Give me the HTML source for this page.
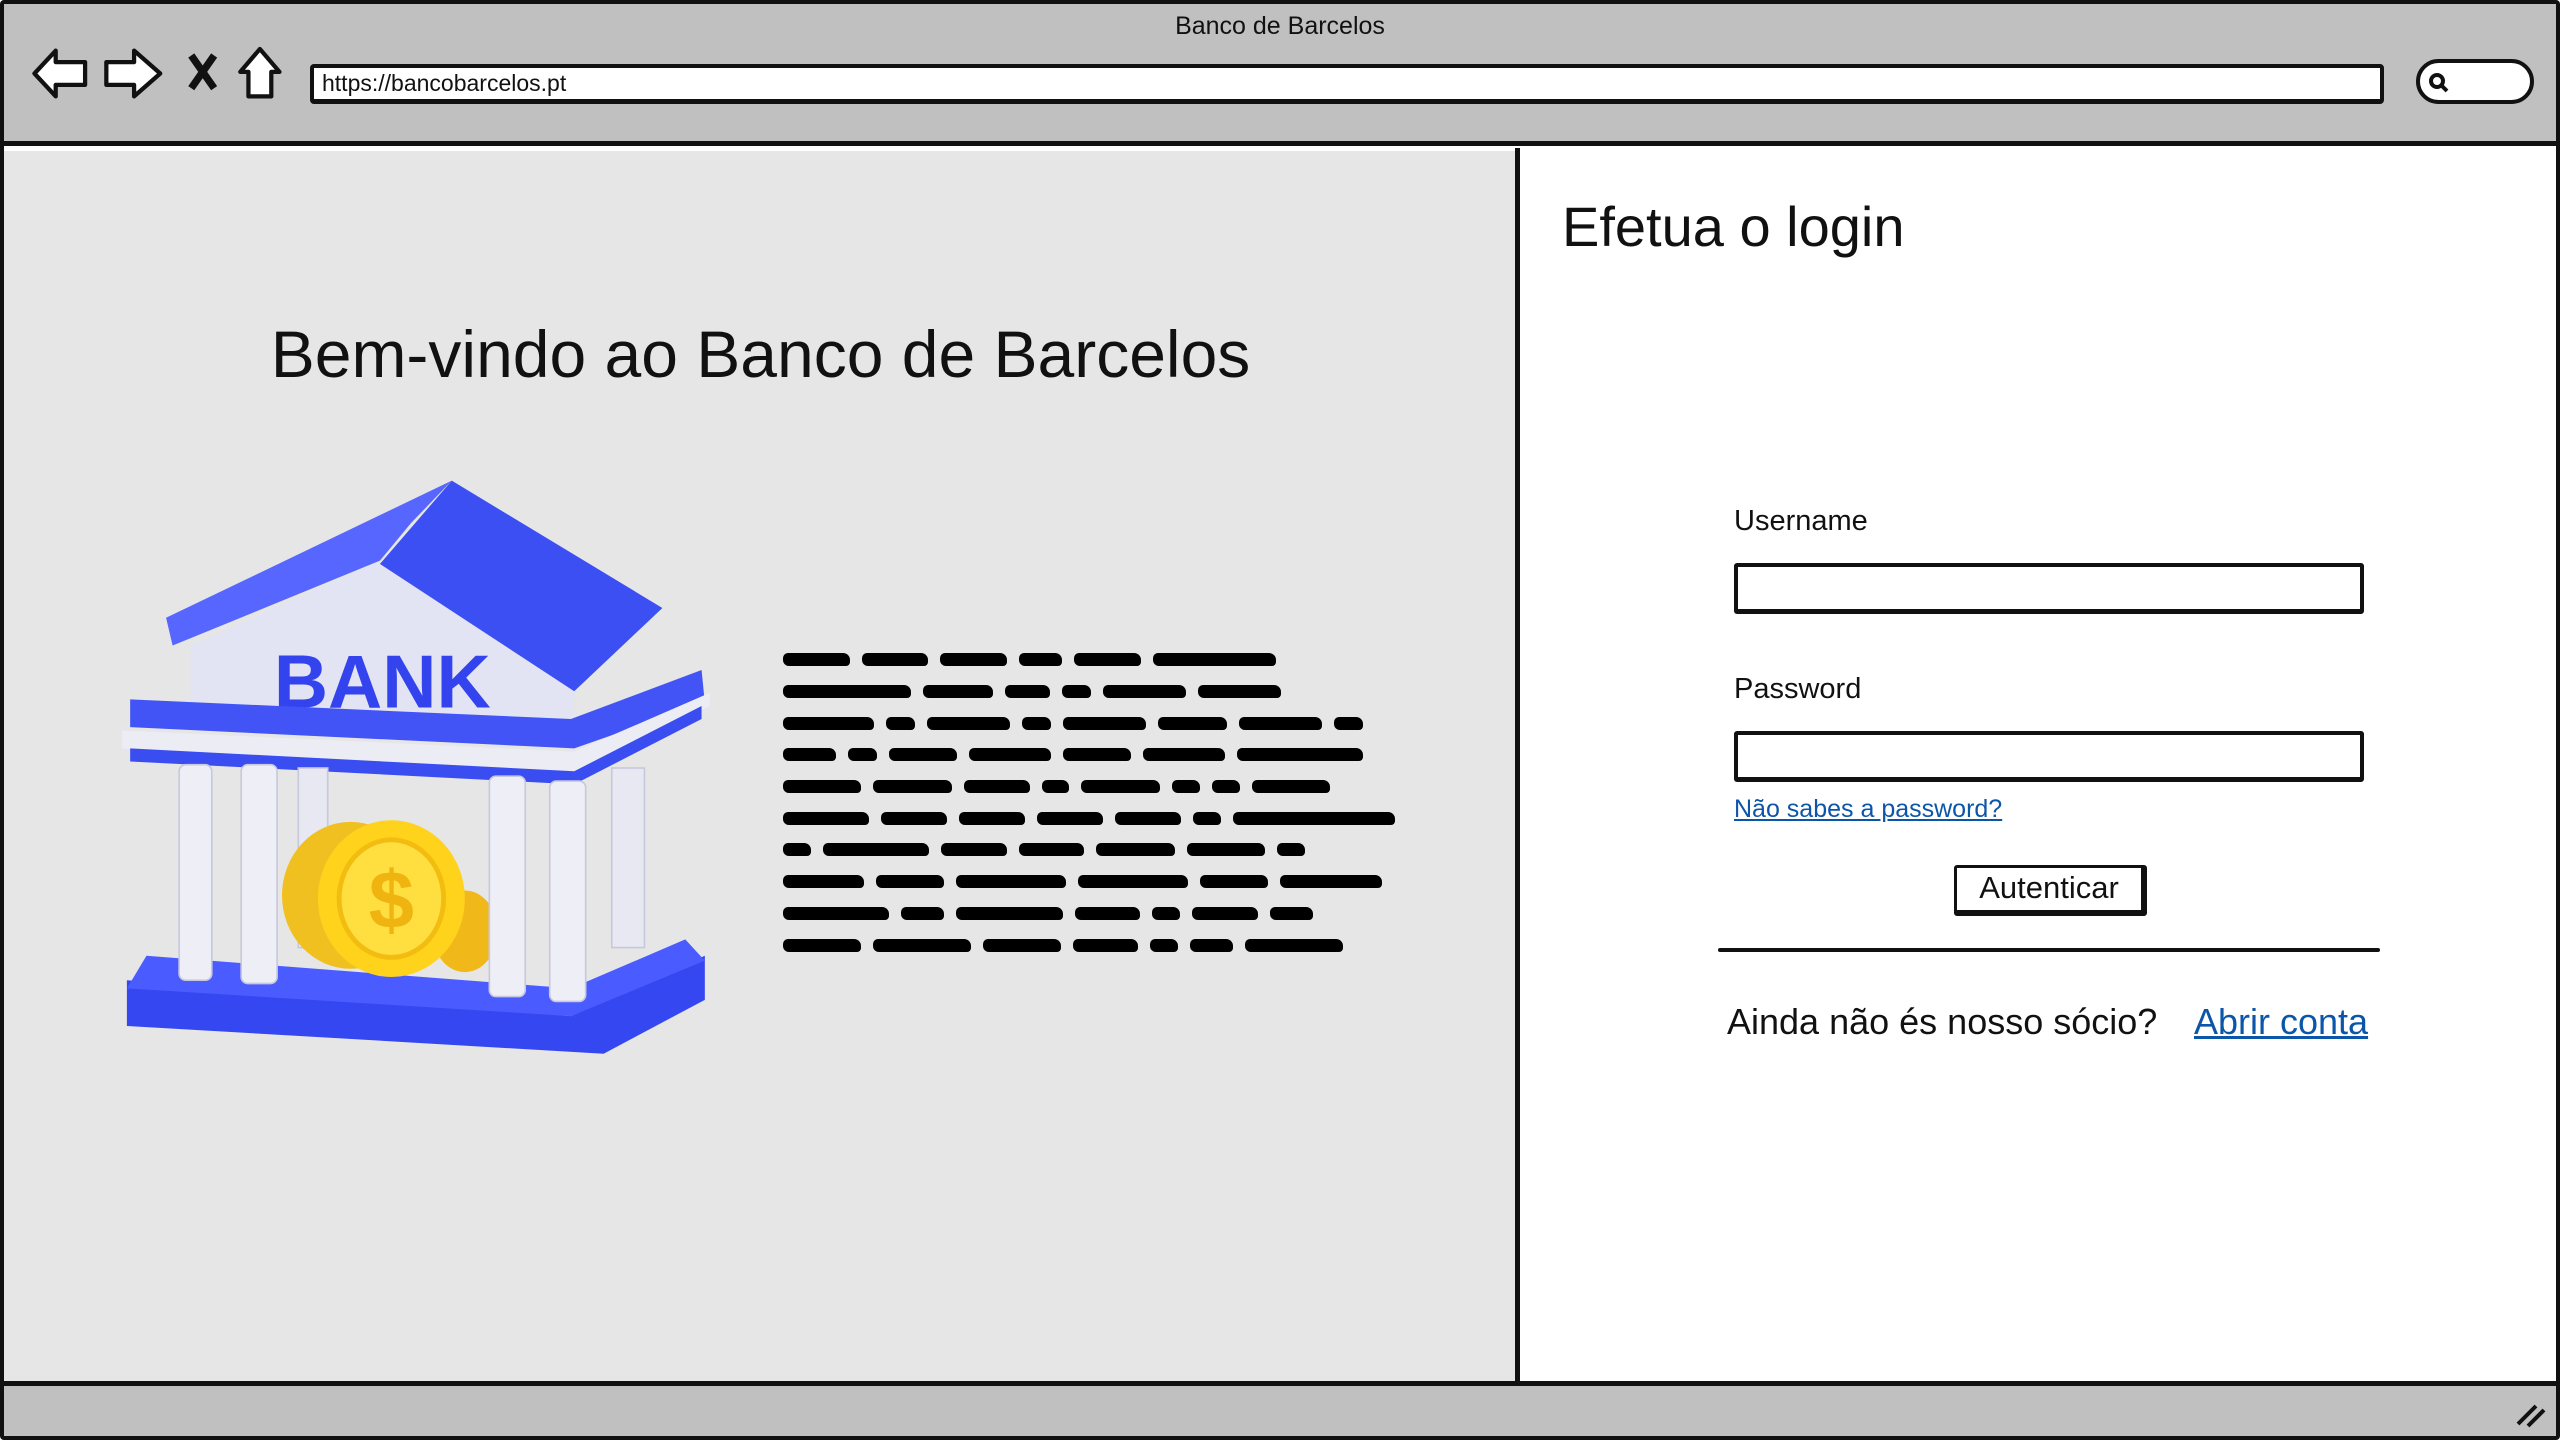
<!DOCTYPE html>
<html><head><meta charset="utf-8"><style>
*{margin:0;padding:0;box-sizing:border-box}
body{width:2560px;height:1440px;overflow:hidden;background:#fff;font-family:"Liberation Sans",sans-serif;position:relative}
.a{position:absolute}
.sc{display:flex;gap:12px;height:31.7px;align-items:center}
.sc i{display:block;height:13px;background:#000;border-radius:5px 7px 4px 6px}
</style></head><body>
<div class="a" style="left:0;top:0;width:2560px;height:1440px;border:4px solid #111;border-radius:4px"></div>
<div class="a" style="left:4px;top:4px;width:2552px;height:142px;background:#c0c0c0;border-bottom:5px solid #111"></div>
<div class="a" style="left:0;top:12px;width:2560px;text-align:center;font-size:25px;color:#111">Banco de Barcelos</div>
<svg class="a" style="left:0;top:0" width="327" height="147" viewBox="0 0 200 90">
<g fill="#fff" stroke="#111" stroke-width="2.6" stroke-linejoin="round">
<path d="M21 45 L34 31 L34 38 L52 38 L52 52 L34 52 L34 59 Z"/>
<path d="M98 45 L82 31 L82 38 L65 38 L65 52 L82 52 L82 59 Z"/>
<path d="M159 30 L147 44 L152 44 L152 59 L166 59 L166 44 L171 44 Z"/>
</g>
<path d="M117 34 L131 54 M131 34 L117 54" stroke="#111" stroke-width="4.5"/>
</svg>
<div class="a" style="left:310px;top:64px;width:2074px;height:40px;background:#fff;border:4px solid #111;border-radius:4px;border-bottom-width:5px;font-size:23px;line-height:30px;padding-left:8px;color:#111">https://bancobarcelos.pt</div>
<div class="a" style="left:2416px;top:59px;width:118px;height:45px;background:#fff;border:4px solid #111;border-radius:24px"></div>
<svg class="a" style="left:2424px;top:68px" width="30" height="30" viewBox="0 0 30 30"><circle cx="13" cy="13" r="6" fill="none" stroke="#111" stroke-width="4"/><path d="M17 17 L23 23" stroke="#111" stroke-width="4"/></svg>
<div class="a" style="left:4px;top:151px;width:1513px;height:1231px;background:#e6e6e6"></div>
<div class="a" style="left:1515px;top:148px;width:5px;height:1236px;background:#111"></div>
<div class="a" style="left:4px;top:316px;width:1513px;text-align:center;font-size:66px;color:#111">Bem-vindo ao Banco de Barcelos</div>
<svg class="a" style="left:122px;top:474px" width="591" height="588" viewBox="75 290 362 360">
<polygon points="117,395 233,343 352,420 352,448 117,445" fill="#e2e3f3"/>
<polygon points="233,345 277,294 406,372 352,423" fill="#3c4ff2"/>
<polygon points="277,294 102,378 106,395 233,343 252,320" fill="#5666ff"/>
<text x="168" y="433" font-family="Liberation Sans" font-weight="bold" font-size="46" fill="#3344ee">BANK</text>
<polygon points="80,428 350,440 430,410 432,430 352,458 80,445" fill="#4254f5"/>
<polygon points="75,447 352,460 435,424 435,432 352,472 75,458" fill="#ececf5"/>
<polygon points="80,458 352,472 430,432 430,440 352,480 80,466" fill="#3a4df0"/>
<g fill="#e8e8f2" stroke="#c8c8dc" stroke-width="1">
<rect x="183" y="470" width="18" height="110"/><rect x="375" y="470" width="20" height="110"/>
</g>
<polygon points="78,600 350,622 432,585 432,612 370,645 78,628" fill="#3447f0"/>
<polygon points="90,585 350,605 420,575 432,588 350,622 78,605" fill="#4a5cff"/>
<ellipse cx="215" cy="548" rx="42" ry="45" fill="#f0c020"/>
<ellipse cx="285" cy="570" rx="20" ry="25" fill="#f0b818"/>
<ellipse cx="240" cy="550" rx="45" ry="48" fill="#ffd21c"/>
<ellipse cx="240" cy="550" rx="32" ry="36" fill="#ffdf40" stroke="#f2bd10" stroke-width="3"/>
<text x="240" y="568" text-anchor="middle" font-family="Liberation Sans" font-weight="bold" font-size="50" fill="#f0b410">$</text>
<g fill="#eeeef6" stroke="#c8c8dc" stroke-width="1">
<rect x="110" y="468" width="20" height="132" rx="4"/><rect x="148" y="468" width="22" height="134" rx="4"/>
<rect x="300" y="475" width="22" height="135" rx="4"/><rect x="337" y="478" width="22" height="135" rx="4"/>
</g>
</svg>
<div class="a" style="left:783px;top:644px">
<div class="sc" style="width:493px"><i style="flex:52"></i><i style="flex:52"></i><i style="flex:52"></i><i style="flex:34"></i><i style="flex:52"></i><i style="flex:96"></i></div>
<div class="sc" style="width:498px"><i style="flex:96"></i><i style="flex:52"></i><i style="flex:34"></i><i style="flex:22"></i><i style="flex:62"></i><i style="flex:62"></i></div>
<div class="sc" style="width:580px"><i style="flex:68"></i><i style="flex:22"></i><i style="flex:62"></i><i style="flex:22"></i><i style="flex:62"></i><i style="flex:52"></i><i style="flex:62"></i><i style="flex:22"></i></div>
<div class="sc" style="width:580px"><i style="flex:40"></i><i style="flex:22"></i><i style="flex:52"></i><i style="flex:62"></i><i style="flex:52"></i><i style="flex:62"></i><i style="flex:96"></i></div>
<div class="sc" style="width:547px"><i style="flex:62"></i><i style="flex:62"></i><i style="flex:52"></i><i style="flex:22"></i><i style="flex:62"></i><i style="flex:22"></i><i style="flex:22"></i><i style="flex:62"></i></div>
<div class="sc" style="width:612px"><i style="flex:68"></i><i style="flex:52"></i><i style="flex:52"></i><i style="flex:52"></i><i style="flex:52"></i><i style="flex:22"></i><i style="flex:128"></i></div>
<div class="sc" style="width:522px"><i style="flex:22"></i><i style="flex:84"></i><i style="flex:52"></i><i style="flex:52"></i><i style="flex:62"></i><i style="flex:62"></i><i style="flex:22"></i></div>
<div class="sc" style="width:599px"><i style="flex:62"></i><i style="flex:52"></i><i style="flex:84"></i><i style="flex:84"></i><i style="flex:52"></i><i style="flex:78"></i></div>
<div class="sc" style="width:530px"><i style="flex:84"></i><i style="flex:34"></i><i style="flex:84"></i><i style="flex:52"></i><i style="flex:22"></i><i style="flex:52"></i><i style="flex:34"></i></div>
<div class="sc" style="width:560px"><i style="flex:62"></i><i style="flex:78"></i><i style="flex:62"></i><i style="flex:52"></i><i style="flex:22"></i><i style="flex:34"></i><i style="flex:78"></i></div>
</div>
<div class="a" style="left:1562px;top:194px;font-size:56px;color:#111">Efetua o login</div>
<div class="a" style="left:1734px;top:505px;font-size:29px;color:#111">Username</div>
<div class="a" style="left:1734px;top:563px;width:630px;height:51px;border:4px solid #111;border-bottom-width:5px;border-radius:3px;background:#fff"></div>
<div class="a" style="left:1734px;top:673px;font-size:29px;color:#111">Password</div>
<div class="a" style="left:1734px;top:731px;width:630px;height:51px;border:4px solid #111;border-bottom-width:5px;border-radius:3px;background:#fff"></div>
<div class="a" style="left:1734px;top:795px;font-size:25px;color:#0b56a8;text-decoration:underline">Não sabes a password?</div>
<div class="a" style="left:1954px;top:865px;width:193px;height:51px;border:3px solid #111;border-right-width:6px;border-bottom-width:6px;border-radius:3px;background:#fff;font-size:31px;text-align:center;line-height:40px;color:#111">Autenticar</div>
<div class="a" style="left:1718px;top:948px;width:662px;height:4px;background:#111;border-radius:2px"></div>
<div class="a" style="left:1727px;top:1001px;font-size:36px;color:#111">Ainda não és nosso sócio?</div>
<div class="a" style="left:2194px;top:1001px;font-size:36px;color:#0b56a8;text-decoration:underline">Abrir conta</div>
<div class="a" style="left:4px;top:1381px;width:2552px;height:55px;background:#c0c0c0;border-top:5px solid #111"></div>
<svg class="a" style="left:2512px;top:1398px" width="36" height="30"><path d="M6 26 L24 8 M16 28 L32 12" stroke="#111" stroke-width="4"/></svg>
</body></html>
